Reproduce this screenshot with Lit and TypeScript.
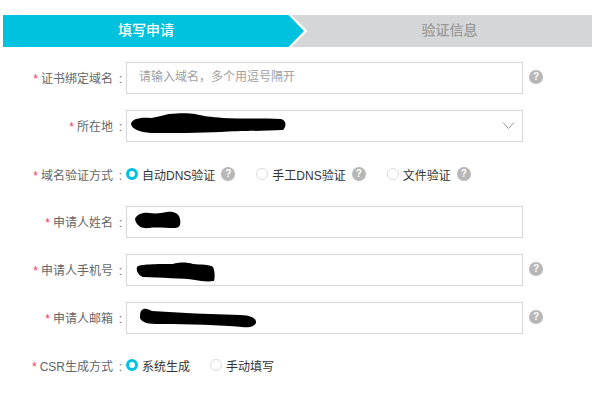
import { LitElement, html, css, svg } from "lit";
import { customElement } from "lit/decorators.js";

const help = html`<span class="help">?</span>`;
const radio = (label: string, on: boolean, withHelp: boolean, cls = "") => html`
  <span class="opt ${cls}">
    <span class="radio ${on ? "on" : ""}"></span>
    <span class="opt-text">${label}</span>
    ${withHelp ? help : ""}
  </span>`;

const label = (text: string, cls = "") => html`
  <div class="label ${cls}"><span class="star">*</span>${text}<span class="colon">:</span></div>`;

const blob = (w: number, h: number, d: string, cls: string) => html`
  <svg class="blob ${cls}" width=${w} height=${h} viewBox="0 0 ${w} ${h}">${svg`<path d=${d} fill="#000"/>`}</svg>`;

@customElement("app-root")
export class AppRoot extends LitElement {
  static styles = css`
    :host {
      display: block;
      width: 595px;
      height: 400px;
      overflow: hidden;
      background: #fff;
      font-family: "Liberation Sans", "Noto Sans CJK SC", sans-serif;
      font-size: 12px;
      color: #666;
    }
    .steps {
      position: relative;
      display: flex;
      width: 589px;
      height: 32px;
      margin: 15px 0 15px 3px;
      background: #d5d6d8;
      font-size: 14px;
      line-height: 31px;
      text-align: center;
    }
    .step-a {
      width: 286px;
      background: #00c1de;
      color: #fff;
      font-weight: 500;
    }
    .step-b {
      margin-left: 18px;
      width: 285px;
      color: #999;
      font-weight: 500;
    }
    .arrow {
      position: absolute;
      left: 285px;
      top: 0;
    }
    .form {
      display: flex;
      flex-direction: column;
      gap: 16px;
    }
    .row {
      display: flex;
      align-items: center;
      height: 32px;
    }
    .row.last {
      margin-top: -1px;
    }
    .label {
      width: 123px;
      flex: none;
      text-align: right;
      margin-right: 3px;
      white-space: nowrap;
      color: #666;
    }
    .label.in-input {
      padding-bottom: 2px;
    }
    .star {
      color: #ff3366;
      margin-right: 3px;
    }
    .colon {
      display: inline-block;
      width: 10px;
      padding-right: 1px;
      box-sizing: border-box;
      text-align: right;
    }
    .box {
      position: relative;
      box-sizing: border-box;
      width: 397px;
      height: 32px;
      flex: none;
      border: 1px solid #d7d8d9;
      padding-left: 12px;
      line-height: 28px;
      color: #a0a0a0;
    }
    .box + .help {
      margin-left: 6px;
      margin-bottom: 2px;
    }
    .blob {
      position: absolute;
      display: block;
      overflow: visible;
    }
    .b1 { left: 4px; top: 2px; }
    .b2 { left: 8px; top: 4px; }
    .b3 { left: 10px; top: 7px; }
    .b4 { left: 13px; top: 5px; }
    .chev {
      position: absolute;
      right: 7px;
      top: 10px;
    }
    .help {
      display: inline-block;
      flex: none;
      width: 14px;
      height: 14px;
      border-radius: 50%;
      background: #b7b7b7;
      color: #fff;
      font-size: 10px;
      font-weight: 700;
      line-height: 14px;
      text-align: center;
    }
    .opts {
      display: flex;
      align-items: center;
    }
    .opt {
      display: flex;
      align-items: center;
      color: #333;
      margin-right: 21px;
      white-space: nowrap;
    }
    .opt.tight {
      margin-right: 20px;
    }
    .opt .help {
      margin-left: 6px;
    }
    .opt-text {
      margin-left: 4px;
    }
    .radio {
      box-sizing: border-box;
      width: 12px;
      height: 12px;
      border-radius: 50%;
      border: 1px solid #dcdcdc;
      background: #fff;
    }
    .radio.on {
      border: 3.5px solid #00c1de;
    }
  `;

  render() {
    return html`
      <div class="steps">
        <div class="step-a">填写申请</div>
        <div class="step-b">验证信息</div>
        <svg class="arrow" width="22" height="32" viewBox="0 0 22 32">
          <polygon points="0,0 3.5,0 19.5,16 3.5,32 0,32" fill="#fff" />
          <polygon points="0,0 0,32 0.5,32 16,16 0.5,0" fill="#00c1de" />
        </svg>
      </div>
      <div class="form">
        <div class="row">
          ${label("证书绑定域名", "in-input")}
          <div class="box">请输入域名，多个用逗号隔开</div>
          ${help}
        </div>
        <div class="row">
          ${label("所在地", "in-input")}
          <div class="box">
            ${blob(156, 21, "M0 11 C1 6 8 4 20 5 C28 4 32 2 38 1 C48 0 58 0 64 1 C72 3 80 4 92 5 C110 6 130 5 150 6 C155 7 156 13 152 17 C130 18 105 18 90 19 C70 20 40 20 20 20 C8 19 1 16 0 11 Z", "b1")}
            <svg class="chev" width="14" height="9" viewBox="0 0 14 9">
              <path d="M2 1.5 L7.5 7.5 L13 1.5" fill="none" stroke="#999" stroke-width="1" />
            </svg>
          </div>
        </div>
        <div class="row">
          ${label("域名验证方式")}
          <div class="opts">
            ${radio("自动DNS验证", true, true)}
            ${radio("手工DNS验证", false, true)}
            ${radio("文件验证", false, true)}
          </div>
        </div>
        <div class="row">
          ${label("申请人姓名", "in-input")}
          <div class="box">
            ${blob(46, 18, "M0 8 C2 3 8 1 14 2 C22 3 26 2 32 1 C38 0 44 2 45 8 C46 13 45 17 40 17 C30 17 22 16 14 17 C6 18 1 14 0 8 Z", "b2")}
          </div>
        </div>
        <div class="row">
          ${label("申请人手机号", "in-input")}
          <div class="box">
            ${blob(78, 20, "M0 5 C2 2 20 2 36 2 C42 0 50 0 56 2 C64 3 72 2 76 5 C78 9 78 16 77 19 C70 20 64 19 58 18 C46 16 24 16 6 15 C1 13 -1 9 0 5 Z", "b3")}
          </div>
          ${help}
        </div>
        <div class="row">
          ${label("申请人邮箱", "in-input")}
          <div class="box">
            ${blob(117, 20, "M1 3 C4 -1 8 1 12 3 C40 5 70 6 100 7 C110 7 116 10 116 14 C116 18 110 20 102 19 C80 17 50 16 20 16 C8 16 2 15 0 10 C0 7 0 5 1 3 Z", "b4")}
          </div>
          ${help}
        </div>
        <div class="row last">
          ${label("CSR生成方式")}
          <div class="opts">
            ${radio("系统生成", true, false, "tight")}
            ${radio("手动填写", false, false)}
          </div>
        </div>
      </div>
    `;
  }
}
